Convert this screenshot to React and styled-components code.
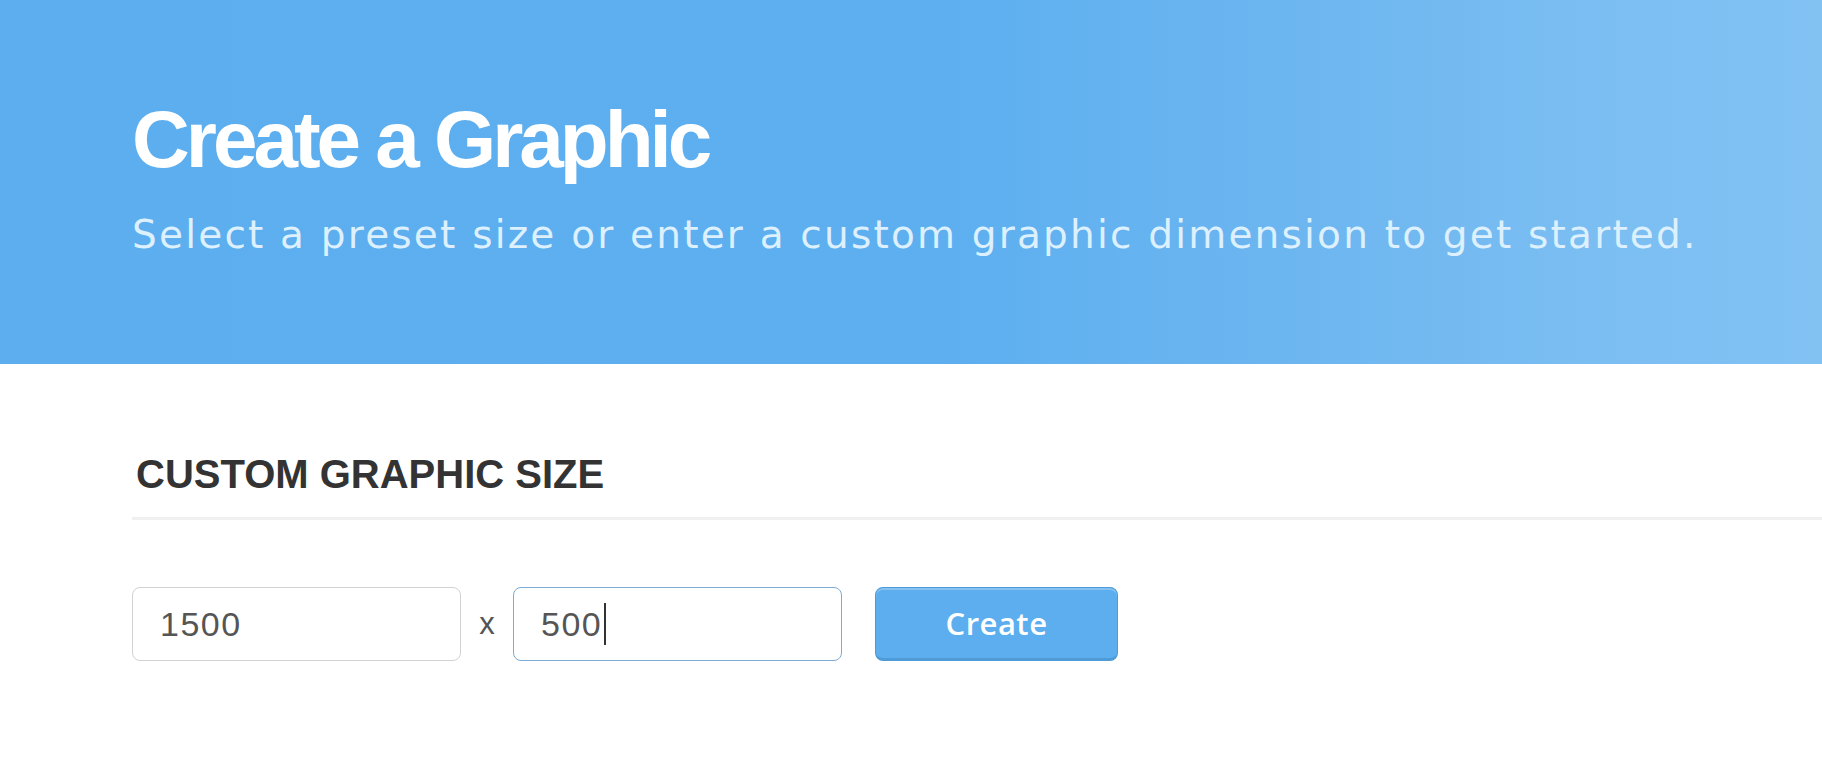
import styled, { createGlobalStyle } from "styled-components";

const GlobalStyle = createGlobalStyle`
    html, body {
        margin: 0;
        padding: 0;
        background: #fff;
    }
    * {
        box-sizing: border-box;
    }
`;

const Page = styled.div`
    width: 100%;
    min-height: 100vh;
    background: #fff;
`;

const Banner = styled.header`
    height: 364px;
    padding: 100px 132px 0;
    background: linear-gradient(90deg, #5caeee 0%, #5daff0 52%, #6db6f0 72%, #7bbef2 88%, #81c2f3 100%);
`;

const Title = styled.h1`
    margin: 0;
    font-family: "Liberation Sans", Arial, sans-serif;
    font-weight: 700;
    font-size: 80px;
    line-height: 80px;
    letter-spacing: -4px;
    color: #fff;
`;

const Subtitle = styled.p`
    margin: 31px 0 0;
    font-family: "DejaVu Sans", sans-serif;
    font-weight: 400;
    font-size: 39px;
    line-height: 48px;
    letter-spacing: 2.2px;
    color: #dcf0fe;
    white-space: nowrap;
`;

const Section = styled.section`
    padding: 86px 0 0 132px;
`;

const SectionHead = styled.h2`
    margin: 0;
    padding: 0 0 19px 4px;
    border-bottom: 3px solid #f0f0f0;
    font-family: "Liberation Sans", Arial, sans-serif;
    font-weight: 700;
    font-size: 40px;
    line-height: 48px;
    color: #333;
`;

const SizeRow = styled.div`
    display: flex;
    align-items: center;
    margin-top: 67px;
`;

const Field = styled.div`
    position: relative;
    width: 329px;
    height: 74px;
`;

const Input = styled.input`
    width: 100%;
    height: 100%;
    padding: 0 0 0 27px;
    border: 1.5px solid ${(p) => (p.$focused ? "#7eaad6" : "#d2d2d2")};
    border-radius: 8px;
    outline: none;
    background: #fff;
    font-family: "Liberation Sans", Arial, sans-serif;
    font-size: 34px;
    letter-spacing: 1.5px;
    color: #555;
    caret-color: transparent;
`;

const Caret = styled.span`
    position: absolute;
    left: 91px;
    top: 16px;
    width: 2px;
    height: 42px;
    background: #333;
`;

const Times = styled.span`
    width: 52px;
    text-align: center;
    font-family: "Liberation Sans", Arial, sans-serif;
    font-size: 31px;
    color: #555;
`;

const CreateButton = styled.button`
    width: 243px;
    height: 74px;
    margin-left: 33px;
    border: 1.5px solid #4f9bd8;
    border-bottom-width: 3px;
    border-radius: 8px;
    background: #5caeee;
    box-shadow: inset 0 2px 0 rgba(255, 255, 255, 0.25);
    font-family: "Open Sans", sans-serif;
    font-weight: 600;
    font-size: 31px;
    letter-spacing: 0.5px;
    color: #fff;
    cursor: pointer;
`;

export default function App() {
    return (
        <Page>
            <GlobalStyle />
            <Banner>
                <Title>Create a Graphic</Title>
                <Subtitle>Select a preset size or enter a custom graphic dimension to get started.</Subtitle>
            </Banner>
            <Section>
                <SectionHead>CUSTOM GRAPHIC SIZE</SectionHead>
                <SizeRow>
                    <Field>
                        <Input defaultValue="1500" />
                    </Field>
                    <Times>x</Times>
                    <Field>
                        <Input $focused defaultValue="500" />
                        <Caret />
                    </Field>
                    <CreateButton>Create</CreateButton>
                </SizeRow>
            </Section>
        </Page>
    );
}
